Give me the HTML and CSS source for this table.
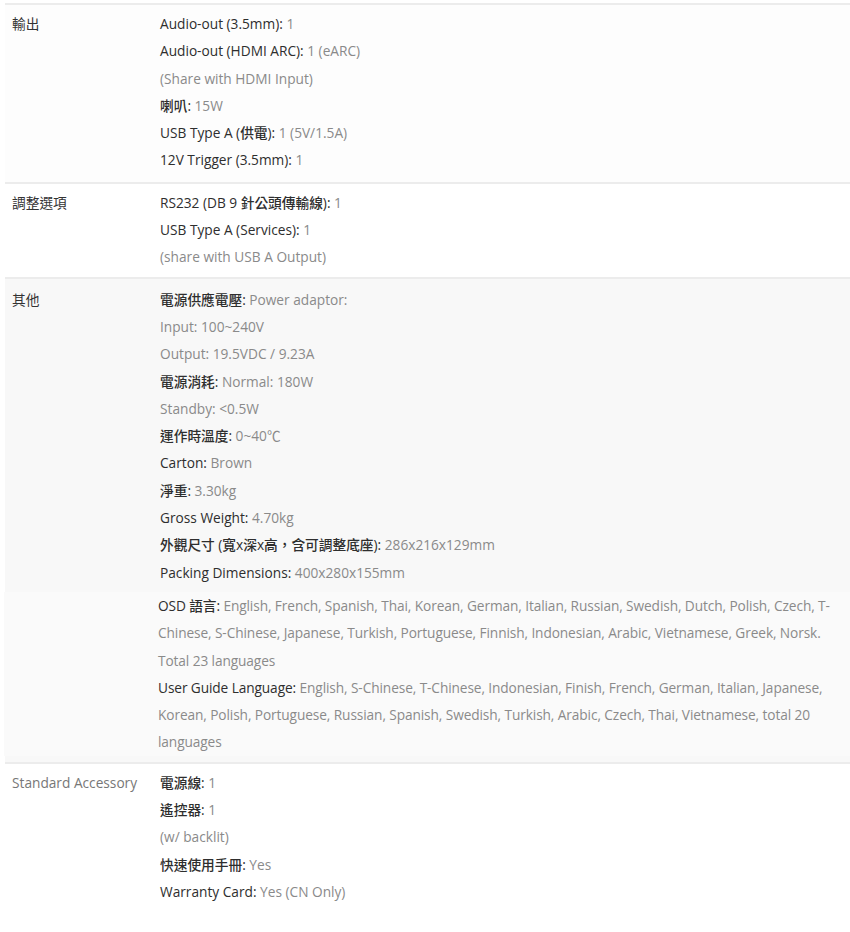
FILE: index.html
```html
<!DOCTYPE html>
<html lang="zh-Hant">
<head>
    <meta charset="UTF-8">
    <meta name="viewport" content="width=device-width, initial-scale=1.0">
    <title>規格</title>
    <link rel="stylesheet" href="styles.css">
</head>
<body>
    <div class="spec-table">
        <div class="spec-row first">
            <div class="spec-name">輸出</div>
            <div class="spec-value">
                <p><b>Audio-out (3.5mm):</b> 1</p>
                <p><b>Audio-out (HDMI ARC):</b> 1 (eARC)</p>
                <p>(Share with HDMI Input)</p>
                <p><b>喇叭:</b> 15W</p>
                <p><b>USB Type A (供電):</b> 1 (5V/1.5A)</p>
                <p><b>12V Trigger (3.5mm):</b> 1</p>
            </div>
        </div>
        <div class="spec-row">
            <div class="spec-name">調整選項</div>
            <div class="spec-value">
                <p><b>RS232 (DB 9 針公頭傳輸線):</b> 1</p>
                <p><b>USB Type A (Services):</b> 1</p>
                <p>(share with USB A Output)</p>
            </div>
        </div>
        <div class="spec-row alt">
            <div class="spec-name">其他</div>
            <div class="spec-value">
                <p><b>電源供應電壓:</b> Power adaptor:</p>
                <p>Input: 100~240V</p>
                <p>Output: 19.5VDC / 9.23A</p>
                <p><b>電源消耗:</b> Normal: 180W</p>
                <p>Standby: &lt;0.5W</p>
                <p><b>運作時溫度:</b> 0~40℃</p>
                <p><b>Carton:</b> Brown</p>
                <p><b>淨重:</b> 3.30kg</p>
                <p><b>Gross Weight:</b> 4.70kg</p>
                <p><b>外觀尺寸 (寬x深x高，含可調整底座):</b> 286x216x129mm</p>
                <p><b>Packing Dimensions:</b> 400x280x155mm</p>
            </div>
            <div class="spec-value narrow">
                <p><b>OSD 語言:</b> English, French, Spanish, Thai, Korean, German, Italian, Russian, Swedish, Dutch, Polish, Czech, T-Chinese, S-Chinese, Japanese, Turkish, Portuguese, Finnish, Indonesian, Arabic, Vietnamese, Greek, Norsk. Total 23 languages</p>
                <p><b>User Guide Language:</b> English, S-Chinese, T-Chinese, Indonesian, Finish, French, German, Italian, Japanese, Korean, Polish, Portuguese, Russian, Spanish, Swedish, Turkish, Arabic, Czech, Thai, Vietnamese, total 20 languages</p>
            </div>
        </div>
        <div class="spec-row last">
            <div class="spec-name light">Standard Accessory</div>
            <div class="spec-value">
                <p><b>電源線:</b> 1</p>
                <p><b>遙控器:</b> 1</p>
                <p>(w/ backlit)</p>
                <p><b>快速使用手冊:</b> Yes</p>
                <p><b>Warranty Card:</b> Yes (CN Only)</p>
            </div>
        </div>
    </div>
</body>
</html>
```

FILE: styles.css
```css
body {
    font-family: 'Open Sans', 'Noto Sans CJK TC', sans-serif;
    font-size: 13.7px;
    margin: 0;
    padding: 0;
    background-color: #fff;
    color: #8a8a8a;
}
.spec-table {
    margin: 3px 0 0 5px;
    border-top: 2px solid #ececec;
}
.spec-row {
    display: grid;
    grid-template-columns: 155px 1fr;
    border-bottom: 2px solid #ececec;
    padding: 5px 0 6px;
    background-color: #fff;
}
.spec-row.first {
    background-color: #fdfdfd;
    padding-bottom: 8px;
}
.spec-row.alt {
    background-color: #f8f8f8;
    padding: 7px 0 6px;
}
.spec-row.last {
    border-bottom: none;
}
.spec-name {
    padding-left: 7px;
    color: #333;
    line-height: 27.3px;
}
.spec-name.light {
    color: #777;
}
.spec-value {
    grid-column: 2;
}
.spec-value p {
    margin: 0;
    line-height: 27.3px;
}
.spec-value b {
    font-weight: 500;
    color: #2e2e2e;
}
.spec-value.narrow {
    margin: 6px 0 0 -156px;
    padding-left: 154px;
    padding-right: 8px;
    background-color: #fafafa;
    letter-spacing: -0.1px;
}
```
